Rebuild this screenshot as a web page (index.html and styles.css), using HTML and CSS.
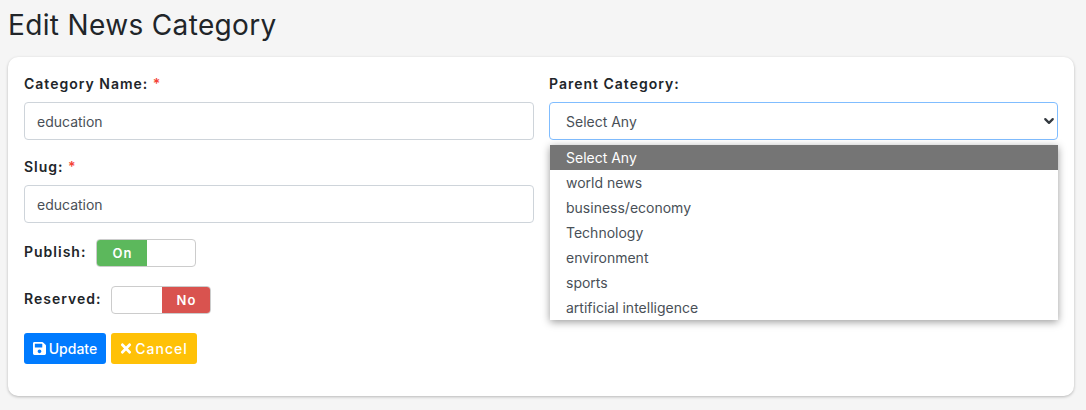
FILE: index.html
```html
<!DOCTYPE html>
<html lang="en">
  <head>
    <meta charset="UTF-8" />
    <meta name="viewport" content="width=device-width, initial-scale=1.0" />
    <title>Edit News Category</title>
    <link rel="stylesheet" href="styles.css">
  </head>
  <body>
    <h1 class="page-title">Edit News Category</h1>

    <form class="card">
      <div class="form-grid">
        <div class="left-col">
          <div class="field">
            <label>Category Name: <span class="req">*</span></label>
            <div class="input">education</div>
          </div>
          <div class="field">
            <label>Slug: <span class="req">*</span></label>
            <div class="input">education</div>
          </div>
          <div class="toggle-row">
            <label>Publish:</label>
            <div class="toggle">
              <span class="toggle-on">On</span>
              <span class="toggle-blank"></span>
            </div>
          </div>
          <div class="toggle-row">
            <label>Reserved:</label>
            <div class="toggle">
              <span class="toggle-blank"></span>
              <span class="toggle-off">No</span>
            </div>
          </div>
          <div class="actions">
            <button type="button" class="btn btn-update">
              <svg class="icon" viewBox="0 0 448 512"><path fill="currentColor" d="M433.9 129.900l-83.900-83.900A48 48 0 0 0 316.100 32H48C21.500 32 0 53.500 0 80v352c0 26.500 21.500 48 48 48h352c26.500 0 48-21.500 48-48V163.900a48 48 0 0 0-14.100-34zM224 416c-35.300 0-64-28.700-64-64 0-35.300 28.700-64 64-64s64 28.700 64 64c0 35.300-28.700 64-64 64zm96-304.500V212c0 6.600-5.400 12-12 12H76c-6.600 0-12-5.400-12-12V108c0-6.600 5.400-12 12-12h228.500c3.200 0 6.200 1.300 8.500 3.500l3.500 3.500c2.200 2.200 3.500 5.300 3.500 8.500z"/></svg>
              Update
            </button>
            <button type="button" class="btn btn-cancel">
              <svg class="icon icon-times" viewBox="0 0 352 512"><path fill="currentColor" d="M242.700 256l100.100-100.100c12.300-12.300 12.300-32.200 0-44.500l-22.200-22.200c-12.300-12.300-32.200-12.300-44.500 0L176 189.300 75.900 89.200c-12.300-12.300-32.200-12.300-44.500 0L9.200 111.500c-12.300 12.300-12.300 32.200 0 44.500L109.300 256 9.200 356.100c-12.300 12.300-12.300 32.200 0 44.500l22.200 22.200c12.300 12.300 32.200 12.300 44.500 0L176 322.700l100.100 100.100c12.300 12.300 32.200 12.300 44.500 0l22.200-22.200c12.300-12.300 12.300-32.200 0-44.500L242.700 256z"/></svg>
              Cancel
            </button>
          </div>
        </div>

        <div class="right-col">
          <div class="field">
            <label>Parent Category:</label>
            <div class="select">
              <span>Select Any</span>
              <svg class="chevron" viewBox="0 0 16 16"><path fill="none" stroke="currentColor" stroke-linecap="round" stroke-linejoin="round" stroke-width="3" d="M3 5.500l5 5 5-5"/></svg>
            </div>
            <ul class="dropdown">
              <li class="selected">Select Any</li>
              <li>world news</li>
              <li>business/economy</li>
              <li>Technology</li>
              <li>environment</li>
              <li>sports</li>
              <li>artificial intelligence</li>
            </ul>
          </div>
        </div>
      </div>
    </form>
  </body>
</html>
```

FILE: styles.css
```css
* {
  box-sizing: border-box;
}

body {
  margin: 0;
  padding: 0 12px 14px 8px;
  background: #f5f5f5;
  font-family: "Inter", sans-serif;
  font-size: 14px;
  color: #212529;
  height: 410px;
  overflow: hidden;
}

.page-title {
  margin: 0;
  height: 57px;
  padding-top: 8px;
  font-size: 28px;
  line-height: 34px;
  font-weight: 400;
  letter-spacing: 0.35px;
}

.card {
  height: 339px;
  padding: 16px;
  background: #fff;
  border-radius: 10px;
  box-shadow: 0 1px 3px rgba(0, 0, 0, 0.25);
}

.form-grid {
  display: grid;
  grid-template-columns: 510px 509px;
  gap: 15px;
}

.field {
  position: relative;
  margin-bottom: 16px;
}

label {
  display: block;
  font-size: 14px;
  line-height: 20px;
  font-weight: 600;
  letter-spacing: 1px;
  margin-bottom: 8px;
  padding-top: 1px;
}

.req {
  color: #f44336;
}

.input,
.select {
  height: 38px;
  border: 1px solid #ced4da;
  border-radius: 4px;
  background: #fff;
  color: #495057;
  font-size: 14px;
  line-height: 38px;
  padding: 0 12px;
}

.select {
  display: flex;
  align-items: center;
  justify-content: space-between;
  border-color: #80bdff;
  padding: 0 2px 0 16px;
}

.select span {
  padding-top: 1px;
}

.chevron {
  width: 12px;
  height: 12px;
  color: #343a40;
}

.dropdown {
  position: absolute;
  top: 72px;
  left: 1px;
  right: 0;
  margin: 0;
  padding: 0;
  list-style: none;
  background: #fff;
  box-shadow: 0 2px 8px rgba(0, 0, 0, 0.4);
  color: #495057;
}

.dropdown li {
  height: 25px;
  line-height: 25px;
  padding-left: 16px;
}

.dropdown .selected {
  background: #757575;
  color: #fff;
}

.toggle-row {
  display: flex;
  align-items: center;
  gap: 10px;
  margin-bottom: 19px;
}

.toggle-row label {
  margin: 0 0 2px;
  padding: 0;
}

.toggle {
  display: flex;
  width: 100px;
  height: 28px;
  border: 1px solid #ccc;
  border-radius: 4px;
  overflow: hidden;
  font-size: 13px;
  font-weight: 600;
  letter-spacing: 1px;
  color: #fff;
  text-align: center;
  line-height: 27px;
}

.toggle span:first-child {
  width: 50px;
}

.toggle span:last-child {
  width: 48px;
}

.toggle-on {
  background: #5cb85c;
}

.toggle-off {
  background: #d9534f;
}

.actions {
  display: flex;
  gap: 5px;
}

.btn {
  display: flex;
  align-items: center;
  justify-content: center;
  gap: 3px;
  height: 31px;
  border: none;
  border-radius: 3px;
  color: #fff;
  font-family: inherit;
  font-size: 14px;
  font-weight: 500;
  padding: 0;
}

.btn-update {
  width: 82px;
  background: #007bff;
}

.btn-cancel {
  width: 86px;
  background: #ffc107;
  letter-spacing: 1px;
}

.icon {
  width: 13px;
  height: 15px;
}

.icon-times {
  width: 12px;
}
```
